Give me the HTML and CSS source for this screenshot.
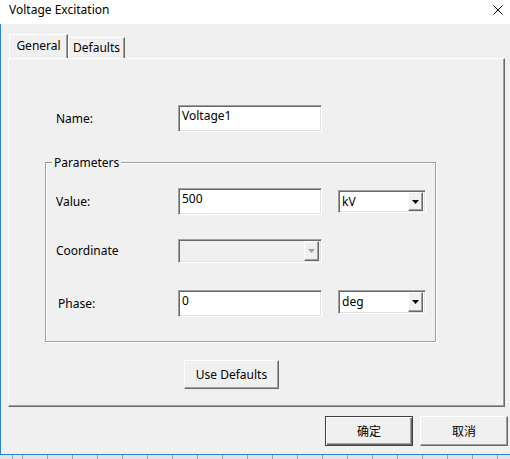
FILE: index.html
```html
<!DOCTYPE html>
<html lang="en">
<head>
    <meta charset="UTF-8">
    <title>Voltage Excitation</title>
    <link rel="stylesheet" href="styles.css">
</head>
<body>
    <div class="titlebar">
        <span class="title">Voltage Excitation</span>
        <svg class="close" width="10" height="10" viewBox="0 0 10 10"><path d="M0.5 0.5L9.5 9.5M9.5 0.5L0.5 9.5" stroke="#000" stroke-width="1"/></svg>
    </div>
    <div class="client">
        <div class="tabs">
            <div class="tab active">General</div>
            <div class="tab">Defaults</div>
        </div>
        <div class="panel">
            <div class="row name-row"><span class="label">Name:</span><div class="edit">Voltage1</div></div>
            <div class="group">
                <div class="legend">Parameters</div>
                <div class="row value-row">
                    <span class="label">Value:</span>
                    <div class="edit">500</div>
                    <div class="combo unit-kv">kV<span class="drop"><svg width="7" height="4" viewBox="0 0 7 4"><path d="M0 0H7L3.5 4Z" fill="#000"/></svg></span></div>
                </div>
                <div class="row coord-row">
                    <span class="label">Coordinate</span>
                    <div class="combo disabled"><span class="drop"><svg width="7" height="4" viewBox="0 0 7 4"><path d="M0 0H7L3.5 4Z" fill="#a0a0a0"/></svg></span></div>
                </div>
                <div class="row phase-row">
                    <span class="label">Phase:</span>
                    <div class="edit">0</div>
                    <div class="combo">deg<span class="drop"><svg width="7" height="4" viewBox="0 0 7 4"><path d="M0 0H7L3.5 4Z" fill="#000"/></svg></span></div>
                </div>
            </div>
            <div class="btn use-defaults">Use Defaults</div>
        </div>
        <div class="footer">
            <div class="btn dlg default">确定</div>
            <div class="btn dlg">取消</div>
        </div>
    </div>
    <div class="desk"></div>
</body>
</html>
```

FILE: styles.css
```css
html, body {
    box-sizing: border-box;
    margin: 0;
    padding: 0;
}
* {
    box-sizing: inherit;
}
body {
    width: 510px;
    height: 459px;
    overflow: hidden;
    background: #f0f0f0;
    color: #000;
    font-family: "Noto Sans", sans-serif;
    font-size: 12px;
    line-height: 14px;
}
.titlebar {
    height: 24px;
    background: #fff;
    display: flex;
    align-items: center;
    justify-content: space-between;
    padding: 0 7px 4px 9px;
}
.client {
    height: 431px;
    border-left: 1px solid #2b85d6;
    border-bottom: 1px solid #2b85d6;
    padding-top: 10px;
}
.tabs {
    margin-left: 8px;
    height: 24px;
    display: flex;
    align-items: flex-end;
}
.tab {
    border: 1px solid;
    border-color: #fff #696969 transparent #fff;
    border-bottom: none;
    box-shadow: inset -1px 0 #a0a0a0;
    display: flex;
    justify-content: center;
    align-items: center;
    width: 57px;
    height: 21px;
}
.tab.active {
    width: 59px;
    height: 24px;
    padding-bottom: 2px;
}
.panel {
    margin-left: 7px;
    width: 497px;
    height: 349px;
    border: 1px solid;
    border-color: #fff #696969 #696969 #fff;
    box-shadow: inset -1px -1px #a0a0a0;
}
.row {
    display: flex;
    align-items: center;
}
.label {
    width: 122px;
    flex-shrink: 0;
}
.name-row {
    margin: 46px 0 0 47px;
}
.edit {
    width: 144px;
    height: 27px;
    background: #fff;
    border: 1px solid;
    border-color: #a0a0a0 #fff #fff #a0a0a0;
    box-shadow: inset 1px 1px #696969, inset -1px -1px #e3e3e3;
    padding: 3px 0 0 3px;
    align-self: flex-start;
}
.group {
    margin: 30px 0 0 36px;
    width: 391px;
    height: 180px;
    border: 1px solid #a0a0a0;
    box-shadow: 1px 1px 0 #fff, inset 1px 1px 0 #fff;
}
.legend {
    display: table;
    margin: -7px 0 0 6px;
    padding: 0 2px;
    background: #f0f0f0;
}
.group .row {
    margin-left: 10px;
}
.value-row {
    margin-top: 18px;
}
.coord-row {
    margin-top: 24px;
}
.phase-row {
    margin-top: 27px;
}
.phase-row .label {
    padding-left: 2px;
}
.combo {
    width: 88px;
    height: 24px;
    margin-left: 16px;
    align-self: flex-start;
    background: #fff;
    border: 1px solid;
    border-color: #a0a0a0 #fff #fff #a0a0a0;
    box-shadow: inset 1px 1px #696969, inset -1px -1px #e3e3e3;
    display: flex;
    align-items: center;
    padding: 1px 2px 1px 3px;
}
.unit-kv {
    margin-top: 2px;
    height: 23px;
}
.combo.disabled {
    width: 144px;
    margin-left: 0;
    background: #f0f0f0;
}
.drop {
    margin-left: auto;
    width: 15px;
    align-self: stretch;
    background: #f0f0f0;
    border: 1px solid;
    border-color: #fff #696969 #696969 #fff;
    box-shadow: inset -1px -1px #a0a0a0;
    display: flex;
    align-items: center;
    justify-content: center;
}
.btn {
    background: #f0f0f0;
    border: 1px solid;
    border-color: #fff #696969 #696969 #fff;
    box-shadow: inset -1px -1px #a0a0a0;
    display: flex;
    align-items: center;
    justify-content: center;
}
.use-defaults {
    margin: 18px 0 0 175px;
    width: 95px;
    height: 29px;
}
.footer {
    margin-top: 9px;
    display: flex;
    justify-content: flex-end;
    gap: 7px;
    padding-right: 2px;
}
.dlg {
    width: 88px;
    height: 30px;
    font-family: "Noto Sans CJK SC", sans-serif;
}
.btn.default {
    border-color: #404040;
    box-shadow: inset 1px 1px #fff, inset -1px -1px #696969, inset -2px -2px #a0a0a0;
}
.desk {
    height: 4px;
    background: repeating-linear-gradient(90deg, #a0a0a0 0 1px, #e3e3e3 1px 25px);
    background-position: 22px 0;
}
```
